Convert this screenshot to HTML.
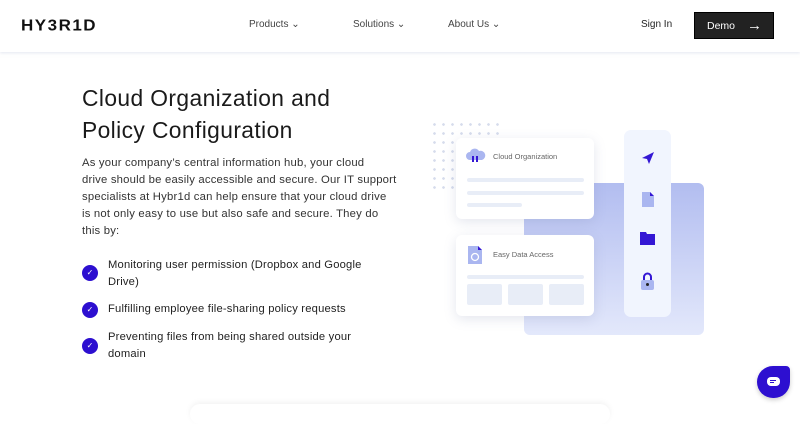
<!DOCTYPE html>
<html><head><style>
*{margin:0;padding:0;box-sizing:border-box}
body{width:800px;height:409px;background:#fff;font-family:"Liberation Sans",sans-serif;position:relative;overflow:hidden;color:#222}
.nav{position:absolute;top:0;left:0;width:800px;height:52px;background:#fff;box-shadow:0 1px 3px rgba(200,205,225,.5)}
.logo{position:absolute;left:21px;top:16px;font-size:17px;font-weight:bold;letter-spacing:1.5px;color:#111;transform:scaleY(.9)}
.mi{position:absolute;top:19px;font-size:10px;color:#444}
.demo{position:absolute;left:694px;top:12px;width:80px;height:27px;background:#222;border:1px solid #000;color:#fff;font-size:10.5px}
h1{position:absolute;left:82px;top:82px;font-size:22.8px;line-height:32px;font-weight:normal;color:#1a1a1a;letter-spacing:.4px}
p{position:absolute;left:82px;top:155px;white-space:nowrap;font-size:11.3px;line-height:17px;color:#333;letter-spacing:.2px}
.li{position:absolute;left:108px;font-size:11.2px;line-height:17px;color:#222;width:270px;letter-spacing:.2px}
.ck{position:absolute;left:82px;width:16px;height:16px;border-radius:50%;background:#2d0fd0;color:#fff;font-size:8px;text-align:center;line-height:16px}
.card{position:absolute;background:#fff;border-radius:6px;box-shadow:0 3px 12px rgba(120,130,170,.2)}
.bar{position:absolute;background:#e8edf7;border-radius:2px}
.dots{position:absolute;left:430px;top:120px;width:70px;height:70px;background-image:radial-gradient(#d6dcec 1.2px,transparent 1.5px);background-size:9px 9px}
</style></head><body>
<div class="nav">
<div class="logo">HY3R1D</div>
<div class="mi" style="left:249px">Products &#8964;</div>
<div class="mi" style="left:353px">Solutions &#8964;</div>
<div class="mi" style="left:448px">About Us &#8964;</div>
<div class="mi" style="left:641px;color:#222">Sign In</div>
<div class="demo"><span style="position:absolute;left:12px;top:7px">Demo</span><span style="position:absolute;left:52px;top:4px;font-size:15px">&#8594;</span></div>
</div>
<h1>Cloud Organization and<br>Policy Configuration</h1>
<p>As your company’s central information hub, your cloud<br>drive should be easily accessible and secure. Our IT support<br>specialists at Hybr1d can help ensure that your cloud drive<br>is not only easy to use but also safe and secure. They do<br>this by:</p>
<div class="ck" style="top:265px">&#10003;</div><div class="li" style="top:257px">Monitoring user permission (Dropbox and Google Drive)</div>
<div class="ck" style="top:302px">&#10003;</div><div class="li" style="top:301px">Fulfilling employee file-sharing policy requests</div>
<div class="ck" style="top:338px">&#10003;</div><div class="li" style="top:329px">Preventing files from being shared outside your domain</div>

<div class="dots"></div>
<div style="position:absolute;left:524px;top:183px;width:180px;height:152px;border-radius:6px;background:linear-gradient(#b2bdf0,#e3e8fb)"></div>
<div style="position:absolute;left:624px;top:130px;width:47px;height:187px;border-radius:7px;background:#f1f5fe"></div>
<svg style="position:absolute;left:640px;top:150px" width="16" height="16"><path d="M14 2L2 8l5 1 2 5z" fill="#3417d4"/></svg>
<svg style="position:absolute;left:642px;top:192px" width="12" height="15"><path d="M0 0h8l4 4v11H0z" fill="#aab6f0"/><path d="M8 0l4 4H8z" fill="#3417d4"/></svg>
<svg style="position:absolute;left:640px;top:232px" width="15" height="13"><path d="M0 0h6l1 2h8v11H0z" fill="#3417d4"/></svg>
<svg style="position:absolute;left:640px;top:272px" width="15" height="18"><path d="M4 8V5a3.5 3.5 0 017 0v3" stroke="#3417d4" stroke-width="2" fill="none"/><rect x="1" y="8" width="13" height="10" rx="2" fill="#aab6f0"/><circle cx="7.5" cy="12.5" r="1.5" fill="#222"/></svg>

<div class="card" style="left:456px;top:138px;width:138px;height:81px">
<svg style="position:absolute;left:10px;top:10px" width="20" height="18"><path d="M4 12a4 4 0 010-8 5 5 0 019 -1 4 4 0 013 9z" fill="#aab6f0"/><path d="M7 8v6M11 8v6" stroke="#3417d4" stroke-width="2"/></svg>
<div style="position:absolute;left:37px;top:14px;font-size:7.5px;color:#666">Cloud Organization</div>
<div class="bar" style="left:11px;top:40px;width:117px;height:4px"></div>
<div class="bar" style="left:11px;top:53px;width:117px;height:4px"></div>
<div class="bar" style="left:11px;top:65px;width:55px;height:4px"></div>
</div>
<div class="card" style="left:456px;top:235px;width:138px;height:81px">
<svg style="position:absolute;left:12px;top:11px" width="14" height="18"><path d="M0 0h10l4 4v14H0z" fill="#aab6f0"/><path d="M10 0l4 4h-4z" fill="#3417d4"/><circle cx="7" cy="11" r="3.5" stroke="#fff" stroke-width="1.3" fill="none"/></svg>
<div style="position:absolute;left:37px;top:15px;font-size:7.5px;color:#666">Easy Data Access</div>
<div class="bar" style="left:11px;top:40px;width:117px;height:4px"></div>
<div class="bar" style="left:11px;top:49px;width:35px;height:21px"></div>
<div class="bar" style="left:52px;top:49px;width:35px;height:21px"></div>
<div class="bar" style="left:93px;top:49px;width:35px;height:21px"></div>
</div>

<div style="position:absolute;left:190px;top:404px;width:420px;height:20px;border-radius:10px;box-shadow:0 -2px 6px rgba(0,0,0,.05)"></div>
<div style="position:absolute;left:757px;top:366px;width:33px;height:32px;border-radius:16px 4px 16px 16px;background:#2d0fd0;box-shadow:0 2px 5px rgba(0,0,0,.2)">
<div style="position:absolute;left:10px;top:11px;width:13px;height:9px;border-radius:4px;background:#fff"></div>
<div style="position:absolute;left:13px;top:14px;width:6px;height:1px;background:#2d0fd0"></div>
<div style="position:absolute;left:13px;top:16px;width:4px;height:1px;background:#2d0fd0"></div>
</div>
</body></html>
